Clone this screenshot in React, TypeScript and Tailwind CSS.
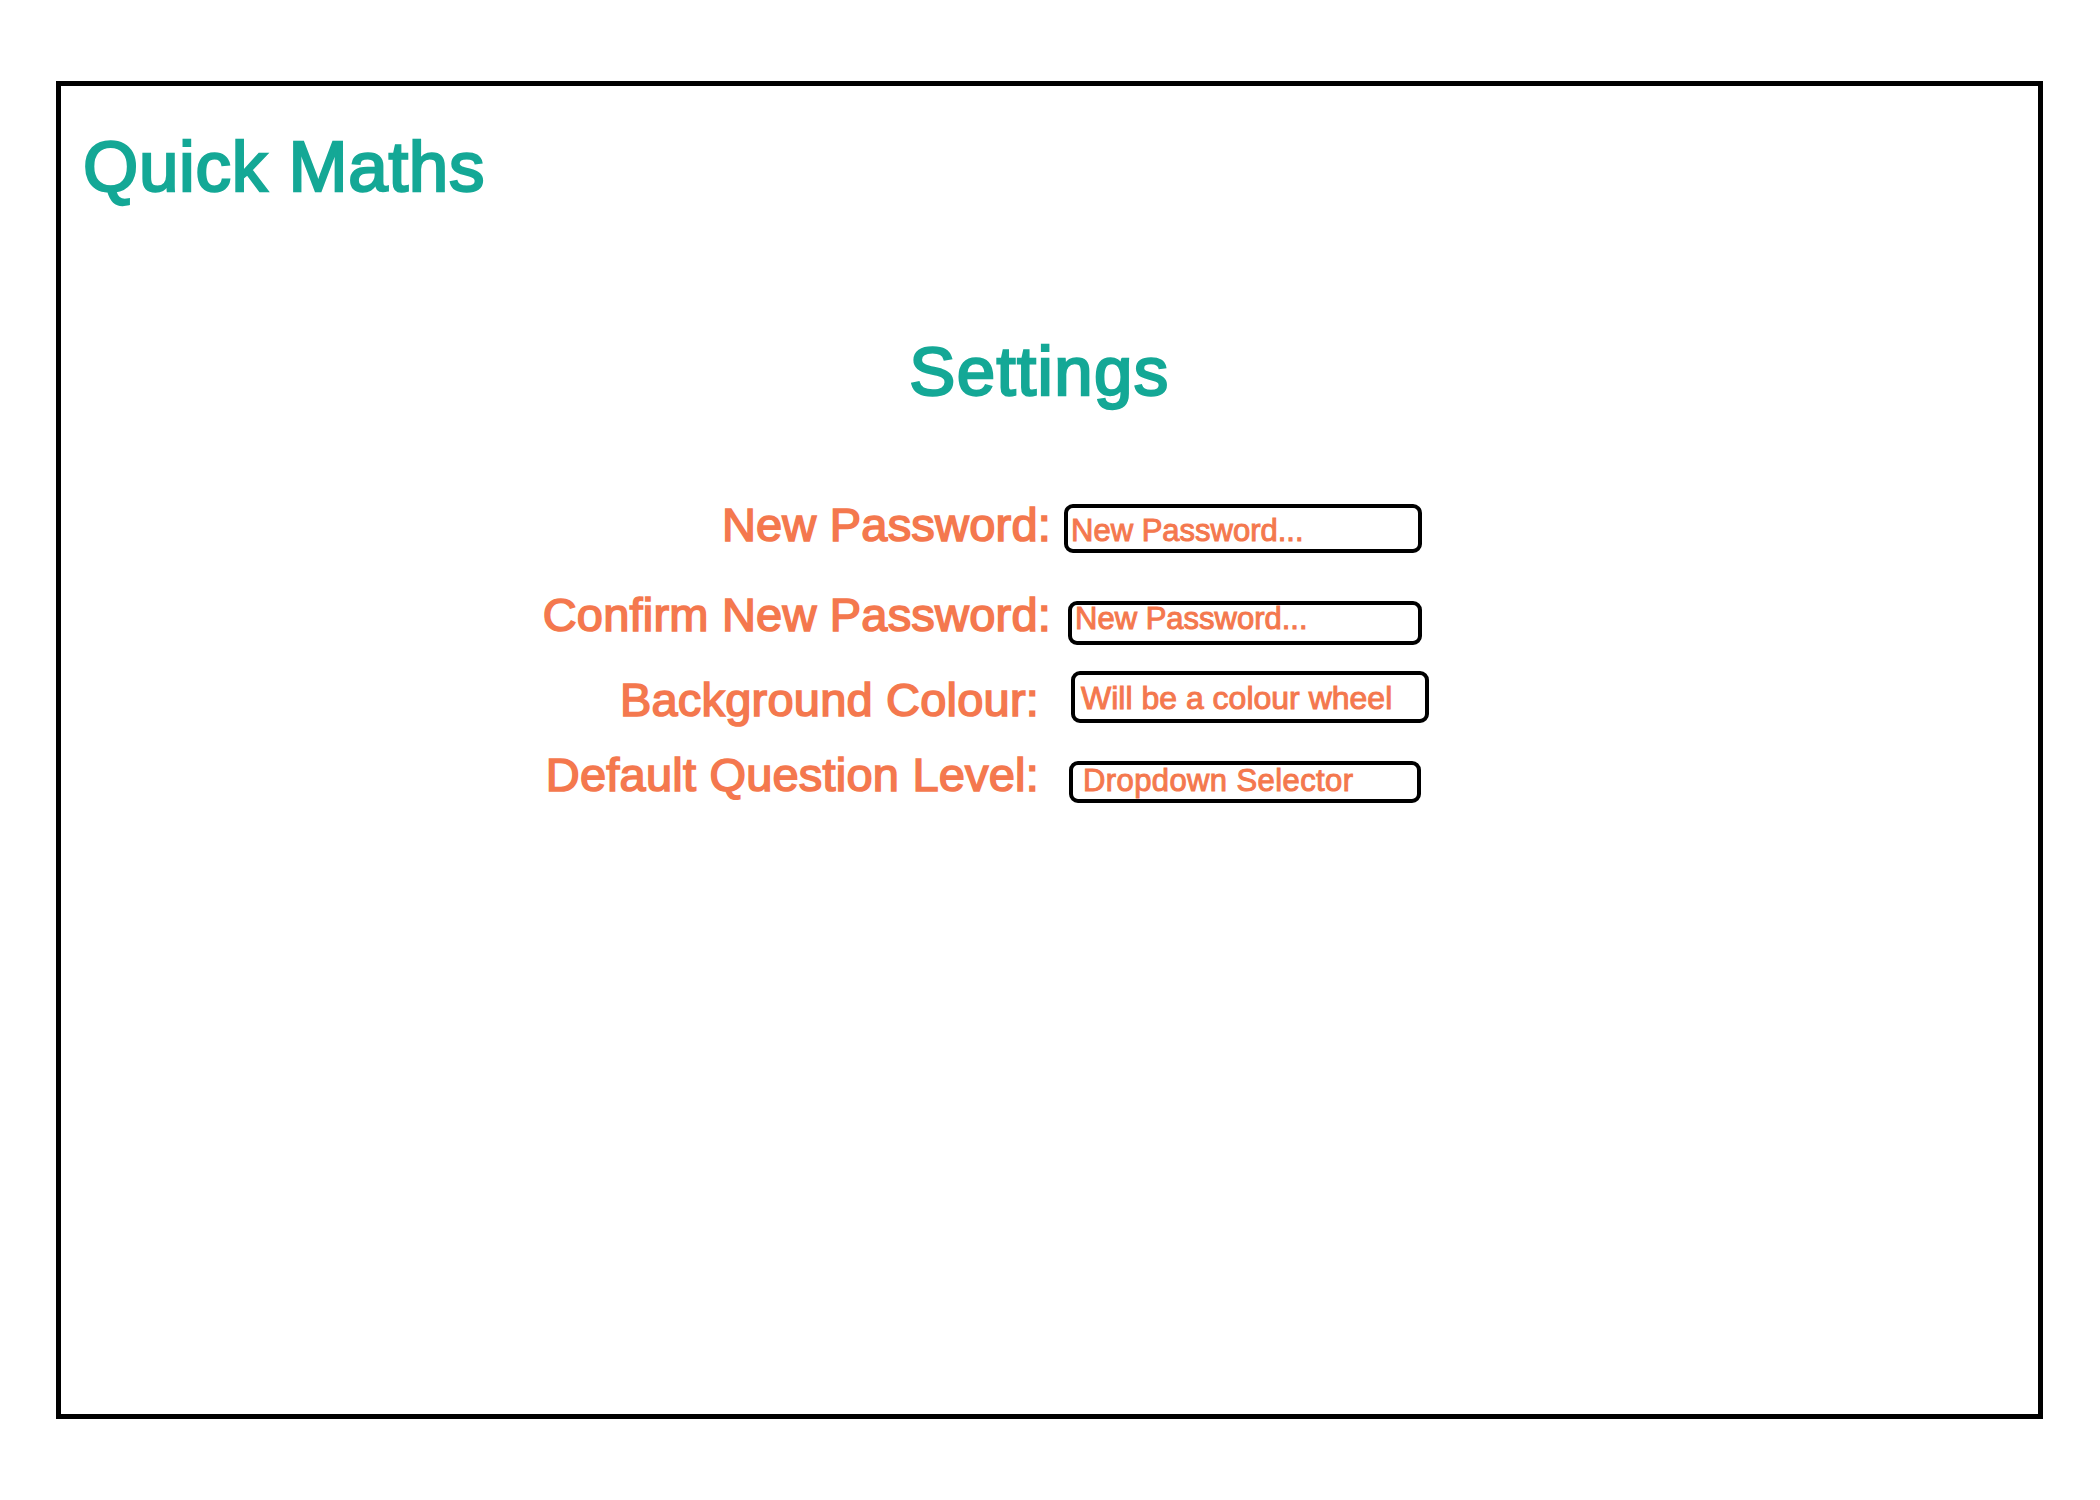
import React from "react";

const font = { fontFamily: '"Liberation Sans", Arial, sans-serif' };

export default function App() {
  return (
    <div className="min-h-[1500px] w-[2100px] bg-white" style={font}>
      <div className="ml-[56px] pt-[81px]">
        <div className="w-[1987px] h-[1338px] border-[5px] border-black box-border flex flex-col">
          <div className="ml-[22px] mt-[45px] text-[71px] leading-[71px] tracking-[0.7px] text-[#14a896] [-webkit-text-stroke:2.4px_#14a896] whitespace-nowrap">
            Quick Maths
          </div>
          <div className="mt-[135px] pr-[20px] text-center text-[69px] leading-[69px] tracking-[1.4px] text-[#14a896] [-webkit-text-stroke:2.4px_#14a896]">
            Settings
          </div>
          <div className="mt-[95px] ml-[470px] flex flex-col text-[#f4784e]">
            {/* Row 1 */}
            <div className="flex items-start">
              <div className="w-[520px] text-right text-[47px] leading-[47px] tracking-[0.2px] whitespace-nowrap [-webkit-text-stroke:1.6px_#f4784e]">
                New Password:
              </div>
              <div className="ml-[13px] mt-[3px] w-[358px] h-[49px] border-[4px] border-black rounded-[9px] box-border pl-[3px] pt-[7px] text-[31px] leading-[31px] whitespace-nowrap [-webkit-text-stroke:1px_#f4784e]">
                New Password...
              </div>
            </div>
            {/* Row 2 */}
            <div className="mt-[38px] flex items-start">
              <div className="w-[520px] text-right text-[47px] leading-[47px] tracking-[0.2px] whitespace-nowrap [-webkit-text-stroke:1.6px_#f4784e]">
                Confirm New Password:
              </div>
              <div className="ml-[17px] mt-[10px] w-[354px] h-[44px] border-[4px] border-black rounded-[9px] box-border pl-[3px] pt-0 text-[31px] leading-[28px] whitespace-nowrap [-webkit-text-stroke:1px_#f4784e]">
                New Password...
              </div>
            </div>
            {/* Row 3 */}
            <div className="mt-[26px] flex items-start">
              <div className="w-[520px] mt-[5px] pr-[12px] text-right text-[47px] leading-[47px] tracking-[0.2px] whitespace-nowrap [-webkit-text-stroke:1.6px_#f4784e]">
                Background Colour:
              </div>
              <div className="ml-[20px] w-[358px] h-[52px] border-[4px] border-black rounded-[9px] box-border pl-[6px] pt-[7px] text-[32px] leading-[32px] whitespace-nowrap [-webkit-text-stroke:1px_#f4784e]">
                Will be a colour wheel
              </div>
            </div>
            {/* Row 4 */}
            <div className="mt-[28px] flex items-start">
              <div className="w-[520px] pr-[12px] text-right text-[47px] leading-[47px] tracking-[0.2px] whitespace-nowrap [-webkit-text-stroke:1.6px_#f4784e]">
                Default Question Level:
              </div>
              <div className="ml-[18px] mt-[10px] w-[352px] h-[42px] border-[4px] border-black rounded-[9px] box-border pl-[10px] pt-0 text-[31px] leading-[31px] tracking-[0.4px] whitespace-nowrap [-webkit-text-stroke:1px_#f4784e]">
                Dropdown Selector
              </div>
            </div>
          </div>
        </div>
      </div>
    </div>
  );
}
